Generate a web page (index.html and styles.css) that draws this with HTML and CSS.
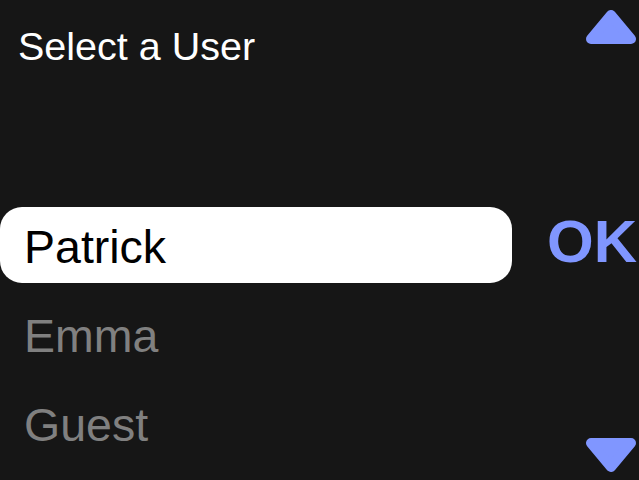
FILE: index.html
```html
<!DOCTYPE html>
<html lang="en">
<head>
    <meta charset="UTF-8">
    <title>Select a User</title>
    <link rel="stylesheet" href="styles.css">
</head>
<body>
    <div class="screen">
        <div class="main">
            <h1 class="title">Select a User</h1>
            <ul class="users">
                <li class="user selected">Patrick</li>
                <li class="user">Emma</li>
                <li class="user">Guest</li>
            </ul>
        </div>
        <div class="side">
            <svg class="arrow" width="50" height="34" viewBox="0 0 50 34">
                <polygon points="25,5 45,29 5,29"/>
            </svg>
            <div class="ok">OK</div>
            <svg class="arrow" width="50" height="34" viewBox="0 0 50 34">
                <polygon points="5,5 45,5 25,29"/>
            </svg>
        </div>
    </div>
</body>
</html>
```

FILE: styles.css
```css
html, body {
    margin: 0;
    padding: 0;
    background-color: #161616;
}
body {
    font-family: 'Liberation Sans', Arial, sans-serif;
    width: 639px;
    height: 480px;
    overflow: hidden;
}
.screen {
    display: grid;
    grid-template-columns: 512px 1fr;
    height: 480px;
}
.main {
    display: flex;
    flex-direction: column;
}
.title {
    margin: 0;
    padding: 27px 0 0 18px;
    font-size: 39.5px;
    line-height: 39px;
    font-weight: 400;
    color: #ffffff;
}
.users {
    list-style: none;
    margin: 141px 0 0 0;
    padding: 0;
    display: flex;
    flex-direction: column;
    gap: 13px;
}
.user {
    height: 71px;
    line-height: 71px;
    padding: 5px 0 0 24px;
    font-size: 46.5px;
    color: #808080;
    border-radius: 22px;
}
.user.selected {
    background-color: #ffffff;
    color: #000000;
}
.side {
    display: flex;
    flex-direction: column;
    align-items: flex-end;
    padding: 10px 3px 8px 0;
}
.arrow polygon {
    fill: #8096ff;
    stroke: #8096ff;
    stroke-width: 10;
    stroke-linejoin: round;
}
.ok {
    margin-top: 168px;
    margin-bottom: auto;
    margin-right: -1px;
    font-size: 60px;
    line-height: 60px;
    font-weight: 700;
    color: #8096ff;
}
```
